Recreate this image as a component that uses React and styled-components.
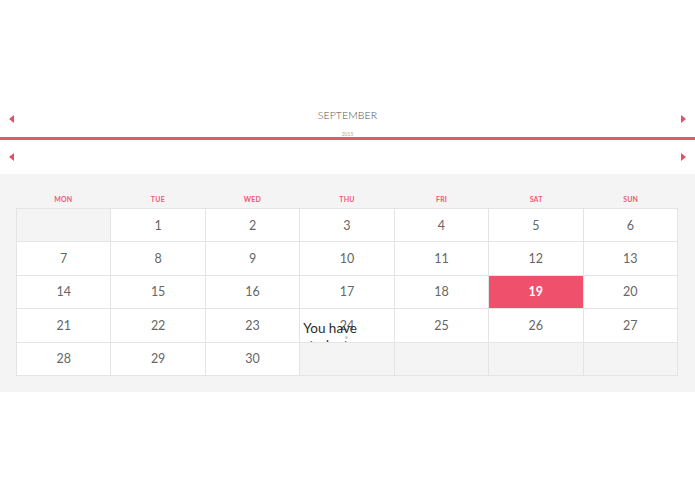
import React from 'react';
import styled, { createGlobalStyle } from 'styled-components';

const days = ['MON', 'TUE', 'WED', 'THU', 'FRI', 'SAT', 'SUN'];

const cells = [
  null, 1, 2, 3, 4, 5, 6,
  7, 8, 9, 10, 11, 12, 13,
  14, 15, 16, 17, 18, 19, 20,
  21, 22, 23, 24, 25, 26, 27,
  28, 29, 30, null, null, null, null,
];

const today = 19;
const eventDay = 24;

const App = () => (
  <>
    <GlobalStyle />
    <Page>
      <MonthBar>
        <Arrow dir="left" />
        <MonthTitle>
          <MonthName>SEPTEMBER</MonthName>
          <Year>2015</Year>
        </MonthTitle>
        <Arrow dir="right" />
      </MonthBar>
      <RedLine />
      <WeekBar>
        <Arrow dir="left" />
        <Arrow dir="right" />
      </WeekBar>
      <Board>
        <DayHeads>
          {days.map((d) => (
            <DayHead key={d}>{d}</DayHead>
          ))}
        </DayHeads>
        <Grid>
          {cells.map((n, i) => (
            <Cell key={i} empty={n === null} active={n === today}>
              {n}
              {n === eventDay && (
                <>
                  <Note>You have students today</Note>
                  <Dot />
                </>
              )}
            </Cell>
          ))}
        </Grid>
      </Board>
    </Page>
  </>
);

export default App;

const GlobalStyle = createGlobalStyle`
  body {
    margin: 0;
    background: #fff;
    font-family: Lato, "Open Sans", sans-serif;
  }
`;

const Page = styled.div`
  width: 695px;
  padding-top: 104px;
`;

const MonthBar = styled.div`
  height: 33px;
  display: flex;
  justify-content: space-between;
  align-items: flex-start;
  padding: 0 9px;
  box-sizing: border-box;

  & > span {
    margin-top: 11px;
  }
`;

const MonthTitle = styled.div`
  display: flex;
  flex-direction: column;
  align-items: center;
`;

const MonthName = styled.div`
  font-size: 10.5px;
  font-weight: 300;
  line-height: 14px;
  margin-top: 4px;
  color: #555;
  letter-spacing: 0.1px;
`;

const Year = styled.div`
  font-size: 5px;
  line-height: 6px;
  margin-top: 9px;
  color: #aaa;
`;

const RedLine = styled.div`
  height: 3px;
  background: #e4586d;
`;

const WeekBar = styled.div`
  height: 34px;
  display: flex;
  justify-content: space-between;
  align-items: center;
  padding: 0 9px;
`;

const Arrow = styled.span`
  width: 0;
  height: 0;
  border-top: 4px solid transparent;
  border-bottom: 4px solid transparent;
  ${({ dir }) =>
    dir === 'left'
      ? 'border-right: 5px solid #e4506a;'
      : 'border-left: 5px solid #e4506a;'}
`;

const Board = styled.div`
  background: #f4f4f4;
  padding: 18px 17px 16px 16px;
`;

const DayHeads = styled.div`
  display: grid;
  grid-template-columns: repeat(7, 1fr);
  height: 16px;
  align-items: center;
`;

const DayHead = styled.div`
  text-align: center;
  font-size: 7px;
  font-weight: 700;
  color: #ee5a72;
  letter-spacing: 0.2px;
  padding-bottom: 3px;
`;

const Grid = styled.div`
  display: grid;
  grid-template-columns: repeat(7, 1fr);
  grid-auto-rows: 33.4px;
  border-top: 1px solid #e4e4e4;
  border-left: 1px solid #e4e4e4;
  box-sizing: border-box;
`;

const Cell = styled.div`
  position: relative;
  overflow: hidden;
  display: flex;
  align-items: center;
  justify-content: center;
  border-right: 1px solid #e4e4e4;
  border-bottom: 1px solid #e4e4e4;
  background: ${({ empty, active }) =>
    active ? '#ef506b' : empty ? '#f4f4f4' : '#fff'};
  color: ${({ active }) => (active ? '#fff' : '#666')};
  font-weight: ${({ active }) => (active ? 700 : 400)};
  font-size: 12.5px;
`;

const Note = styled.div`
  position: absolute;
  top: 11px;
  left: 3px;
  width: 86px;
  font-size: 13.5px;
  line-height: 17px;
  color: #2a2a2a;
  text-align: left;
  font-weight: 400;
`;

const Dot = styled.span`
  position: absolute;
  left: 45px;
  top: 27px;
  width: 3px;
  height: 3px;
  border-radius: 50%;
  background: #ccc;
`;
